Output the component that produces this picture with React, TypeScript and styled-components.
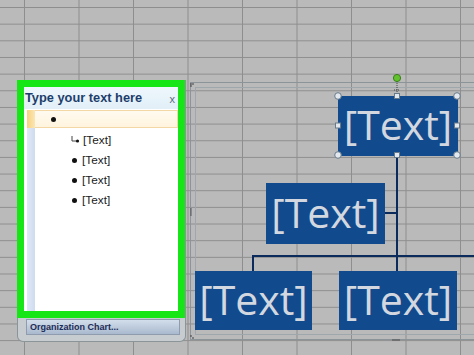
import React from 'react';
import styled, { createGlobalStyle } from 'styled-components';

const GlobalStyle = createGlobalStyle`
  html, body {
    margin: 0;
    padding: 0;
    overflow: hidden;
  }
  #root {
    width: 474px;
    height: 355px;
  }
`;

const Sheet = styled.div`
  position: relative;
  width: 474px;
  height: 355px;
  overflow: hidden;
  background-color: #bababa;
  background-image:
    linear-gradient(to right, #8e8e8e 1px, transparent 1px),
    linear-gradient(to bottom, #8e8e8e 1px, transparent 1px);
  background-size: 54.5px 16.67px;
  background-position: 24px 7px;
  font-family: "Liberation Sans", Arial, sans-serif;
`;

/* ---------- text pane ---------- */

const Pane = styled.div`
  position: absolute;
  left: 17px;
  top: 80px;
  width: 169px;
  height: 262px;
  display: flex;
  flex-direction: column;
  background: #c6cccf;
  border: 1px solid #8b9498;
  border-top: none;
  border-radius: 0 0 6px 6px;
  box-sizing: border-box;
`;

const Highlight = styled.div`
  flex: 1;
  display: flex;
  flex-direction: column;
  margin: 0 0 0 -1px;
  border: 7px solid #16e616;
  background: #ffffff;
`;

const TitleBar = styled.div`
  display: flex;
  align-items: center;
  justify-content: space-between;
  height: 22px;
  padding: 0 3px 0 1px;
  background: linear-gradient(#eef7fc, #e2eff8);
`;

const Title = styled.span`
  font-size: 12.8px;
  font-weight: bold;
  color: #1d3e6c;
  margin-top: -2px;
`;

const Close = styled.span`
  font-size: 11px;
  color: #5a6a80;
  margin-top: 2px;
`;

const ListArea = styled.div`
  flex: 1;
  display: flex;
  margin: 1px 0 0 3px;
  background: #ffffff;
`;

const Gutter = styled.div`
  width: 8px;
  display: flex;
  flex-direction: column;
  background: linear-gradient(to right, #dfe8f6, #cfdcef);
`;

const GutterMark = styled.div`
  height: 18px;
  background: linear-gradient(to right, #f6d27c, #fbe6b5);
`;

const Rows = styled.div`
  flex: 1;
  display: flex;
  flex-direction: column;
`;

const Row = styled.div<{ active?: boolean; indent: number }>`
  display: flex;
  align-items: center;
  height: ${p => (p.active ? '18px' : '20px')};
  padding-left: ${p => p.indent}px;
  box-sizing: border-box;
  background: ${p => (p.active ? 'linear-gradient(#fffaf0, #fff4dd)' : 'transparent')};
  border: ${p => (p.active ? '1px solid #f3d7a4' : 'none')};
  border-left: none;
  margin-bottom: ${p => (p.active ? '2px' : '0')};
`;

const Bullet = styled.span`
  width: 5px;
  height: 5px;
  border-radius: 50%;
  background: #111;
  margin-right: 5px;
`;

const ItemText = styled.span`
  font-size: 11.8px;
  color: #222;
`;

const Footer = styled.div`
  display: flex;
  align-items: center;
  height: 14px;
  margin: 1px 5px 6px 8px;
  padding-left: 3px;
  background: linear-gradient(#d3deeb, #a9b9ce);
  border: 1px solid #8f9cae;
  font-size: 9px;
  font-weight: bold;
  color: #1c2b57;
`;

/* ---------- org chart ---------- */

const ChartFrame = styled.div`
  position: absolute;
  left: 190px;
  top: 82px;
  width: 300px;
  height: 258px;
  border: 1px solid #8a9499;
  box-sizing: border-box;

  &::before {
    content: '';
    position: absolute;
    inset: 4px;
    border: 1px solid #9ea7ab;
  }
`;

const Node = styled.div<{ x: number; y: number; w: number; h: number }>`
  position: absolute;
  left: ${p => p.x}px;
  top: ${p => p.y}px;
  width: ${p => p.w}px;
  height: ${p => p.h}px;
  display: flex;
  align-items: center;
  justify-content: center;
  background: #124b8d;
  color: #d3d8e0;
  font-family: "Open Sans", "Liberation Sans", sans-serif;
  font-size: 41px;
  line-height: 1;
  padding-bottom: 3px;
  box-sizing: border-box;
`;

const Overlay = styled.svg`
  position: absolute;
  left: -1px;
  top: -1px;
  overflow: visible;
`;

const PaneRow: React.FC<{ active?: boolean; child?: boolean; bullet?: boolean; text?: string; indent: number }> = ({ active, child, bullet, text, indent }) => (
  <Row active={active} indent={indent}>
    {child && (
      <svg width="10" height="10" style={{ marginRight: 3 }}>
        <path d="M2 1 V6 H6" stroke="#444" strokeWidth="1" fill="none" />
        <circle cx="7.5" cy="6" r="1.6" fill="#111" />
      </svg>
    )}
    {bullet && <Bullet />}
    {text && <ItemText>{text}</ItemText>}
  </Row>
);

const App: React.FC = () => {
  const lineColor = '#0c2b5d';

  return (
    <Sheet>
      <GlobalStyle />

      <Pane>
        <Highlight>
          <TitleBar>
            <Title>Type your text here</Title>
            <Close>x</Close>
          </TitleBar>
          <ListArea>
            <Gutter>
              <GutterMark />
            </Gutter>
            <Rows>
              <PaneRow active bullet indent={16} />
              <PaneRow child text="[Text]" indent={35} />
              <PaneRow bullet text="[Text]" indent={37} />
              <PaneRow bullet text="[Text]" indent={37} />
              <PaneRow bullet text="[Text]" indent={37} />
            </Rows>
          </ListArea>
        </Highlight>
        <Footer>Organization Chart...</Footer>
      </Pane>

      <ChartFrame>
        <Overlay width="300" height="260">
          {/* connectors */}
          <line x1="207" y1="73" x2="207" y2="189" stroke={lineColor} strokeWidth="2" />
          <line x1="194" y1="131" x2="207" y2="131" stroke={lineColor} strokeWidth="2" />
          <line x1="63" y1="174" x2="300" y2="174" stroke={lineColor} strokeWidth="2" />
          <line x1="63" y1="173" x2="63" y2="189" stroke={lineColor} strokeWidth="2" />
          {/* frame grips */}
          <g fill="#333">
            <circle cx="1" cy="2" r="0.8" />
            <circle cx="3" cy="2" r="0.8" />
            <circle cx="1" cy="4" r="0.8" />
            <circle cx="1" cy="127" r="0.7" />
            <circle cx="1" cy="129" r="0.7" />
            <circle cx="1" cy="131" r="0.7" />
            <circle cx="1" cy="133" r="0.7" />
            <circle cx="1" cy="254" r="0.8" />
            <circle cx="3" cy="256" r="0.8" />
            <circle cx="203" cy="258" r="0.7" />
            <circle cx="205" cy="258" r="0.7" />
            <circle cx="207" cy="258" r="0.7" />
            <circle cx="209" cy="258" r="0.7" />
          </g>
        </Overlay>

        <Node x={147} y={13} w={120} h={60}>[Text]</Node>
        <Node x={75} y={100} w={119} h={61}>[Text]</Node>
        <Node x={4} y={188} w={117} h={59}>[Text]</Node>
        <Node x={148} y={188} w={118} h={59}>[Text]</Node>

        <Overlay width="300" height="260">
          {/* selection handles of the top node */}
          <line x1="207" y1="-1" x2="207" y2="13" stroke="#444" strokeWidth="1" strokeDasharray="1 1" />
          <line x1="204" y1="8" x2="210" y2="8" stroke="#444" strokeWidth="1" strokeDasharray="1 1" />
          <circle cx="207" cy="-4" r="3.6" fill="#62c22c" stroke="#3c7d1e" strokeWidth="1" />
          <g fill="#e2e8ee" stroke="#667a8a" strokeWidth="1">
            <circle cx="148" cy="14" r="3.3" />
            <circle cx="267" cy="14" r="3.3" />
            <circle cx="148" cy="73" r="3.3" />
            <circle cx="267" cy="73" r="3.3" />
            <rect x="204.5" y="11.5" width="5" height="5" />
            <rect x="204.5" y="70.5" width="5" height="5" />
            <rect x="145.5" y="41" width="5" height="5" />
            <rect x="264.5" y="41" width="5" height="5" />
          </g>
        </Overlay>
      </ChartFrame>
    </Sheet>
  );
};

export default App;
